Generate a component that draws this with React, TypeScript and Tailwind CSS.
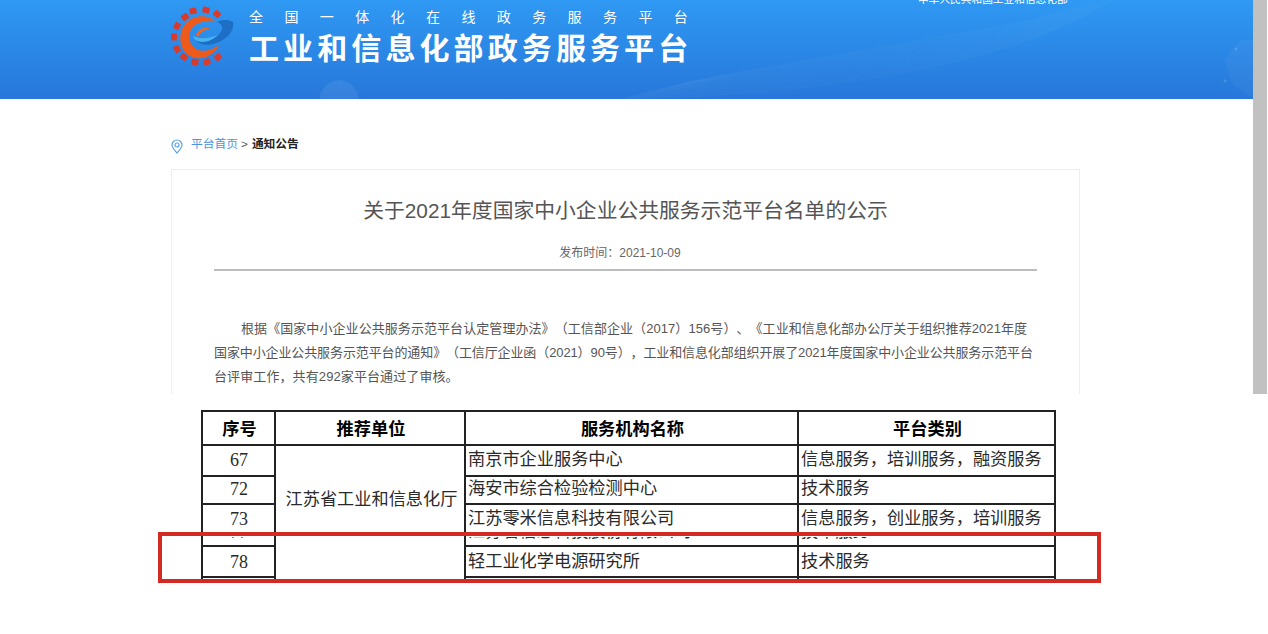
const SANS = "font-['Liberation_Sans','Noto_Sans_CJK_SC',sans-serif]";

const GEAR: [number, number][] = [
  [28, 11], [41, 10], [52, 14], [20, 17], [12, 26], [9, 37], [12, 49], [19, 57], [30, 62], [42, 62], [53, 57],
];

function Logo() {
  return (
    <svg width="75" height="70" viewBox="0 0 75 70" className="shrink-0 -ml-[6px]">
      {GEAR.map(([x, y]) => {
        const a = (Math.atan2(y - 37, x - 33) * 180) / Math.PI;
        return <rect key={`${x}-${y}`} x={x - 3.5} y={y - 3} width="7" height="6" rx="1" fill="#d93a2b" transform={`rotate(${a + 90} ${x} ${y})`} />;
      })}
      <path d="M68 22 C62 19 56 20 52 22 C58 24 60 30 52 36 C46 41 38 42 31 40 C33 44 40 46 48 44 C60 41 70 32 68 22 Z" fill="#1c6fc5" />
      <path d="M28 36 C30 44 44 44 53 35 C46 38 36 40 28 36 Z" fill="#49b3ef" />
      <path d="M50 21 C42 14 28 15 21 23 C12 33 14 50 25 56 C36 62 48 56 55 44 C48 50 38 53 31 49 C23 44 22 33 28 27 C34 21 44 20 50 21 Z" fill="#ee5a1c" />
      <path d="M31 35 C33 29 41 26 45 29 C41 29 35 32 33 37 Z" fill="#f0651f" />
    </svg>
  );
}

function HeaderDecor() {
  const arcs = Array.from({ length: 18 }, (_, i) => i);
  return (
    <svg aria-hidden="true" width="1253" height="99" viewBox="0 0 1253 99" className="absolute inset-0">
      {arcs.map((i) => (
        <path key={i} d={`M${620 + i * 4} ${99 - i} C ${800 + i * 5} ${96 - i * 3}, ${1010 + i * 3} ${70 - i * 3}, ${1120 - i * 4} ${-5 + i}`} fill="none" stroke="#ffffff" strokeOpacity="0.035" />
      ))}
      <ellipse cx="339" cy="102" rx="20" ry="22" fill="#ffffff" fillOpacity="0.07" />
      <path d="M1240 40 L1225 60 L1232 84 L1253 99 L1253 40 Z" fill="#ffffff" fillOpacity="0.04" />
      <circle cx="1236" cy="49" r="1.5" fill="#ffffff" fillOpacity="0.15" />
      <circle cx="1225" cy="81" r="1.5" fill="#ffffff" fillOpacity="0.15" />
    </svg>
  );
}

function Header() {
  return (
    <header className="relative h-[99px] overflow-hidden bg-gradient-to-b from-[#2f99f3] to-[#2777d9]">
      <HeaderDecor />
      <div className="relative ml-[171px] flex w-[909px]">
        <Logo />
        <div className="ml-[9px] flex w-[440px] flex-col pt-[7px] text-white">
          <div className={`${SANS} text-[14px] leading-[20px] tracking-[21.4px] whitespace-nowrap`}>全国一体化在线政务服务平台</div>
          <div className={`${SANS} mt-[4px] text-[30px] leading-[36px] font-bold tracking-[4.1px] whitespace-nowrap`}>工业和信息化部政务服务平台</div>
        </div>
        <div className={`${SANS} ml-[229px] -mt-[8px] text-[10.7px] leading-[14px] whitespace-nowrap text-white`}>中华人民共和国工业和信息化部</div>
      </div>
    </header>
  );
}

function Article() {
  return (
    <div className="ml-[171px] w-[909px]">
      <div className={`${SANS} flex h-[70px] items-start pt-[37px] text-[11.75px] leading-[16px]`}>
        <svg width="12" height="15" viewBox="0 0 12 15" className="mt-[3px] shrink-0" fill="none" stroke="#5ba3e8" strokeWidth="1.2">
          <path d="M6 14 C3 10.5 1 8.5 1 6 A5 5 0 0 1 11 6 C11 8.5 9 10.5 6 14 Z" />
          <circle cx="6" cy="6" r="2" />
        </svg>
        <span className="ml-[8px] text-[#4b93e2]">平台首页</span>
        <span className="mr-[4px] ml-[3px] text-[#555]">&gt;</span>
        <span className="font-bold text-[#222]">通知公告</span>
      </div>
      <div className="h-[300px] border border-[#eeeeee] px-[42px]">
        <h1 className={`${SANS} pt-[26px] text-center text-[20.8px] leading-[30px] font-normal text-[#555]`}>关于2021年度国家中小企业公共服务示范平台名单的公示</h1>
        <div className={`${SANS} mt-[18px] pr-[11px] text-center text-[12px] leading-[18px] text-[#666]`}>发布时间：2021-10-09</div>
        <div className="mt-[7px] h-[2px] bg-[#bdbdbd]" />
        <p className={`${SANS} mt-[46px] text-[13px] leading-[24px] whitespace-nowrap text-[#555] [text-spacing-trim:space-all]`}>
          <span className="pl-[27px] tracking-[0.07px]">根据《国家中小企业公共服务示范平台认定管理办法》（工信部企业（2017）156号）、《工业和信息化部办公厅关于组织推荐2021年度</span>
          <br />
          <span className="tracking-[-0.11px]">国家中小企业公共服务示范平台的通知》（工信厅企业函（2021）90号），工业和信息化部组织开展了2021年度国家中小企业公共服务示范平台</span>
          <br />
          <span className="tracking-[0.1px]">台评审工作，共有292家平台通过了审核。</span>
        </p>
      </div>
    </div>
  );
}

const CELL = "border-2 border-[#222] p-0 align-middle overflow-hidden whitespace-nowrap";
const UP = "pb-[2px]";
const HEAD = "border-2 border-[#222] pt-[3px] pl-[2px] align-middle overflow-hidden whitespace-nowrap";
const NUM = "pl-[1px] text-center text-[18px]";

function Row({ no, name, kind, h, lift }: { no: string; name: string; kind: string; h: string; lift?: boolean }) {
  const up = lift ? UP : "";
  return (
    <tr className={h}>
      <td className={`${CELL} ${up} ${NUM}`}>{no}</td>
      <td className={`${CELL} ${up} pl-[2px]`}>{name}</td>
      <td className={`${CELL} ${up} pl-[2px]`}>{kind}</td>
    </tr>
  );
}

function Sliver({ text }: { text: string }) {
  return (
    <div className="mt-[7px] h-[4px] overflow-hidden">
      <div className="-mt-[16px]">{text}</div>
    </div>
  );
}

function DataTable() {
  return (
    <div className="relative h-[240px] pt-[16px]">
      <div className="ml-[201px] h-[170px] w-[856px] overflow-hidden">
        <table className="w-[853px] table-fixed border-collapse font-['Liberation_Serif','Noto_Sans_CJK_SC',serif] text-[17.2px] leading-[22px] text-[#2a2a2a] [text-spacing-trim:space-all]">
          <colgroup>
            <col className="w-[73px]" />
            <col className="w-[190px]" />
            <col className="w-[333px]" />
            <col className="w-[257px]" />
          </colgroup>
          <tbody>
            <tr className="h-[34px] text-center font-bold text-black">
              <td className={HEAD}>序号</td>
              <td className={HEAD}>推荐单位</td>
              <td className={HEAD}>服务机构名称</td>
              <td className={HEAD}>平台类别</td>
            </tr>
            <tr className="h-[31px]">
              <td className={`${CELL} ${UP} ${NUM}`}>67</td>
              <td rowSpan={5} className={`${CELL} pl-[3px] text-center`}>
                <div className="-mt-[38px]">江苏省工业和信息化厅</div>
              </td>
              <td className={`${CELL} ${UP} pl-[2px]`}>南京市企业服务中心</td>
              <td className={`${CELL} ${UP} pl-[2px]`}>信息服务，培训服务，融资服务</td>
            </tr>
            <Row lift h="h-[28px]" no="72" name="海安市综合检验检测中心" kind="技术服务" />
            <tr className="h-[42px]">
              <td className={`${CELL} align-top`}>
                <div className={`pt-[3px] ${NUM}`}>
                  <div>73</div>
                  <Sliver text="77" />
                </div>
              </td>
              <td className={`${CELL} align-top`}>
                <div className="h-[40px] overflow-hidden pt-[3px] pl-[2px]">
                  <div>江苏零米信息科技有限公司</div>
                  <Sliver text="江苏省信息科技股份有限公司" />
                </div>
              </td>
              <td className={`${CELL} align-top`}>
                <div className="h-[40px] overflow-hidden pt-[3px] pl-[2px]">
                  <div>信息服务，创业服务，培训服务</div>
                  <Sliver text="技术服务" />
                </div>
              </td>
            </tr>
            <Row h="h-[31px]" no="78" name="轻工业化学电源研究所" kind="技术服务" />
            <Row h="h-[31px]" no="" name="" kind="" />
          </tbody>
        </table>
      </div>
      <div className="absolute top-[138px] left-[158px] h-[51px] w-[943px] border-4 border-[#d32a23]" />
    </div>
  );
}

export default function App() {
  return (
    <div className="h-[634px] w-[1268px] overflow-hidden bg-white">
      <div className="flex h-[394px] overflow-hidden">
        <main className="w-[1253px] shrink-0">
          <Header />
          <Article />
        </main>
        <div className="w-[14px] bg-[#c1c1c1]" />
      </div>
      <DataTable />
    </div>
  );
}
